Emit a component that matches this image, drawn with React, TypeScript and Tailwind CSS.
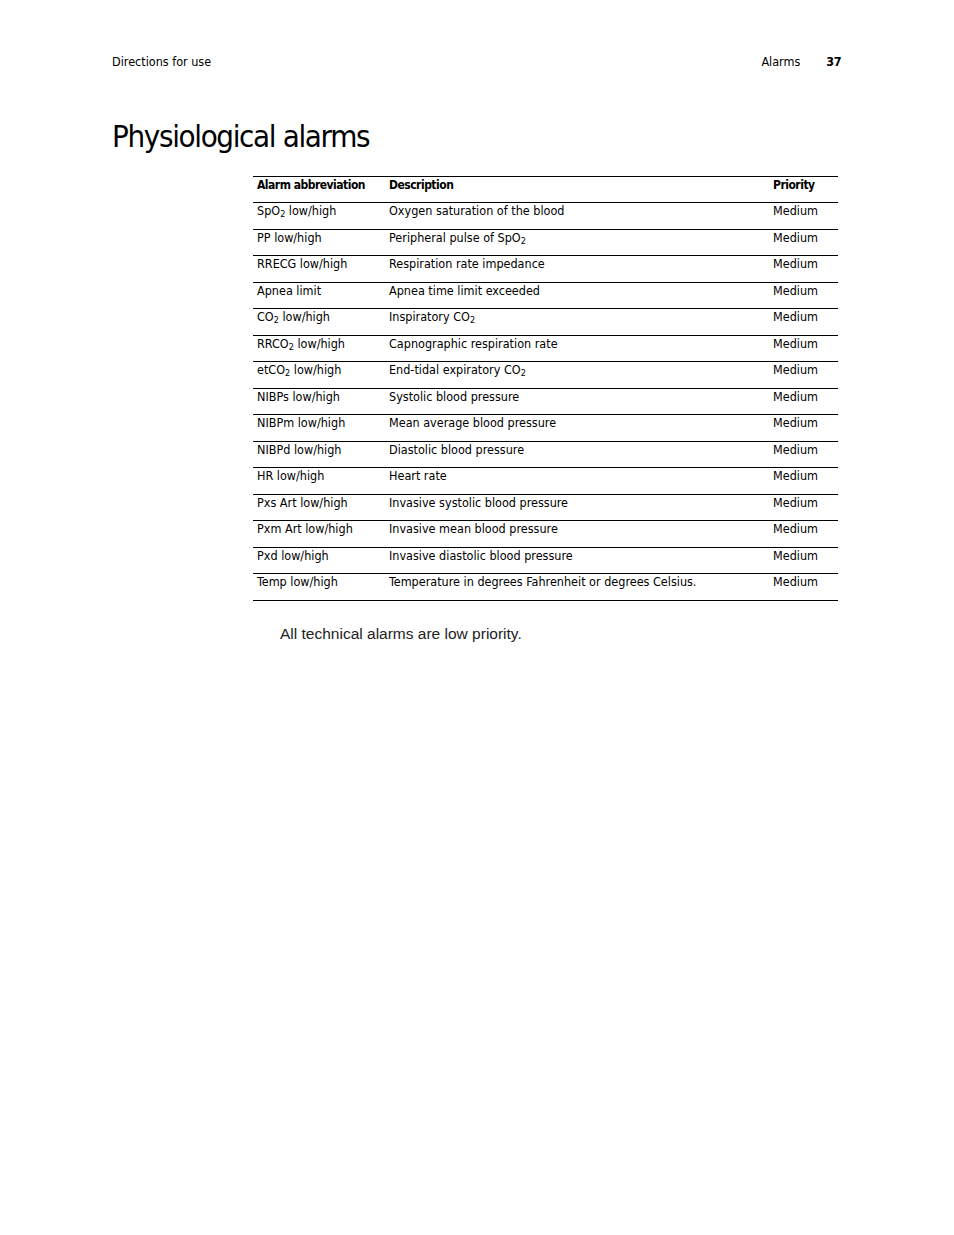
import React from "react";

const cond = { fontFamily: '"Liberation Sans Narrow", "DejaVu Sans Condensed", "Liberation Sans", sans-serif' };

type Row = { abbr: React.ReactNode; desc: React.ReactNode };

const Sub = () => <sub className="text-[9px] relative top-[2px] align-baseline">2</sub>;

const rows: Row[] = [
  { abbr: <>SpO<Sub /> low/high</>, desc: "Oxygen saturation of the blood" },
  { abbr: "PP low/high", desc: <>Peripheral pulse of SpO<Sub /></> },
  { abbr: "RRECG low/high", desc: "Respiration rate impedance" },
  { abbr: "Apnea limit", desc: "Apnea time limit exceeded" },
  { abbr: <>CO<Sub /> low/high</>, desc: <>Inspiratory CO<Sub /></> },
  { abbr: <>RRCO<Sub /> low/high</>, desc: "Capnographic respiration rate" },
  { abbr: <>etCO<Sub /> low/high</>, desc: <>End-tidal expiratory CO<Sub /></> },
  { abbr: "NIBPs low/high", desc: "Systolic blood pressure" },
  { abbr: "NIBPm low/high", desc: "Mean average blood pressure" },
  { abbr: "NIBPd low/high", desc: "Diastolic blood pressure" },
  { abbr: "HR low/high", desc: "Heart rate" },
  { abbr: "Pxs Art low/high", desc: "Invasive systolic blood pressure" },
  { abbr: "Pxm Art low/high", desc: "Invasive mean blood pressure" },
  { abbr: "Pxd low/high", desc: "Invasive diastolic blood pressure" },
  { abbr: "Temp low/high", desc: "Temperature in degrees Fahrenheit or degrees Celsius." },
];

const App = () => {
  return (
    <div className="w-[954px] h-[1235px] bg-white text-black" style={cond}>
      <div className="flex items-center pl-[112px] pr-[113px] pt-[54px] text-[12.5px] leading-[16px]">
        <span className="flex-1">Directions for use</span>
        <span>Alarms</span>
        <span className="ml-[26px] font-bold tracking-[-0.5px]">37</span>
      </div>

      <h1 className="pl-[112px] mt-[46px] text-[31px] leading-[40px] tracking-[-1.35px]">Physiological alarms</h1>

      <div className="ml-[253px] w-[585px] mt-[20px] border-b border-black text-[12.5px]">
        <div className="grid grid-cols-[132px_384px_1fr] h-[26px] border-t border-black font-bold text-[12px] tracking-[-0.5px] pt-[1px] leading-[14px]">
          <div className="pl-[4px]">Alarm abbreviation</div>
          <div className="pl-[4px]">Description</div>
          <div className="pl-[4px]">Priority</div>
        </div>
        {rows.map((r, i) => (
          <div
            key={i}
            className="grid grid-cols-[132px_384px_1fr] h-[26.5px] border-t border-black pt-[1px] leading-[14px]"
          >
            <div className="pl-[4px]">{r.abbr}</div>
            <div className="pl-[4px]">{r.desc}</div>
            <div className="pl-[4px]">Medium</div>
          </div>
        ))}
      </div>

      <p
        className="ml-[280px] mt-[24px] text-[15.5px] leading-[18px] text-[#222]"
        style={{ fontFamily: '"Liberation Sans", Arial, sans-serif' }}
      >
        All technical alarms are low priority.
      </p>
    </div>
  );
};

export default App;
